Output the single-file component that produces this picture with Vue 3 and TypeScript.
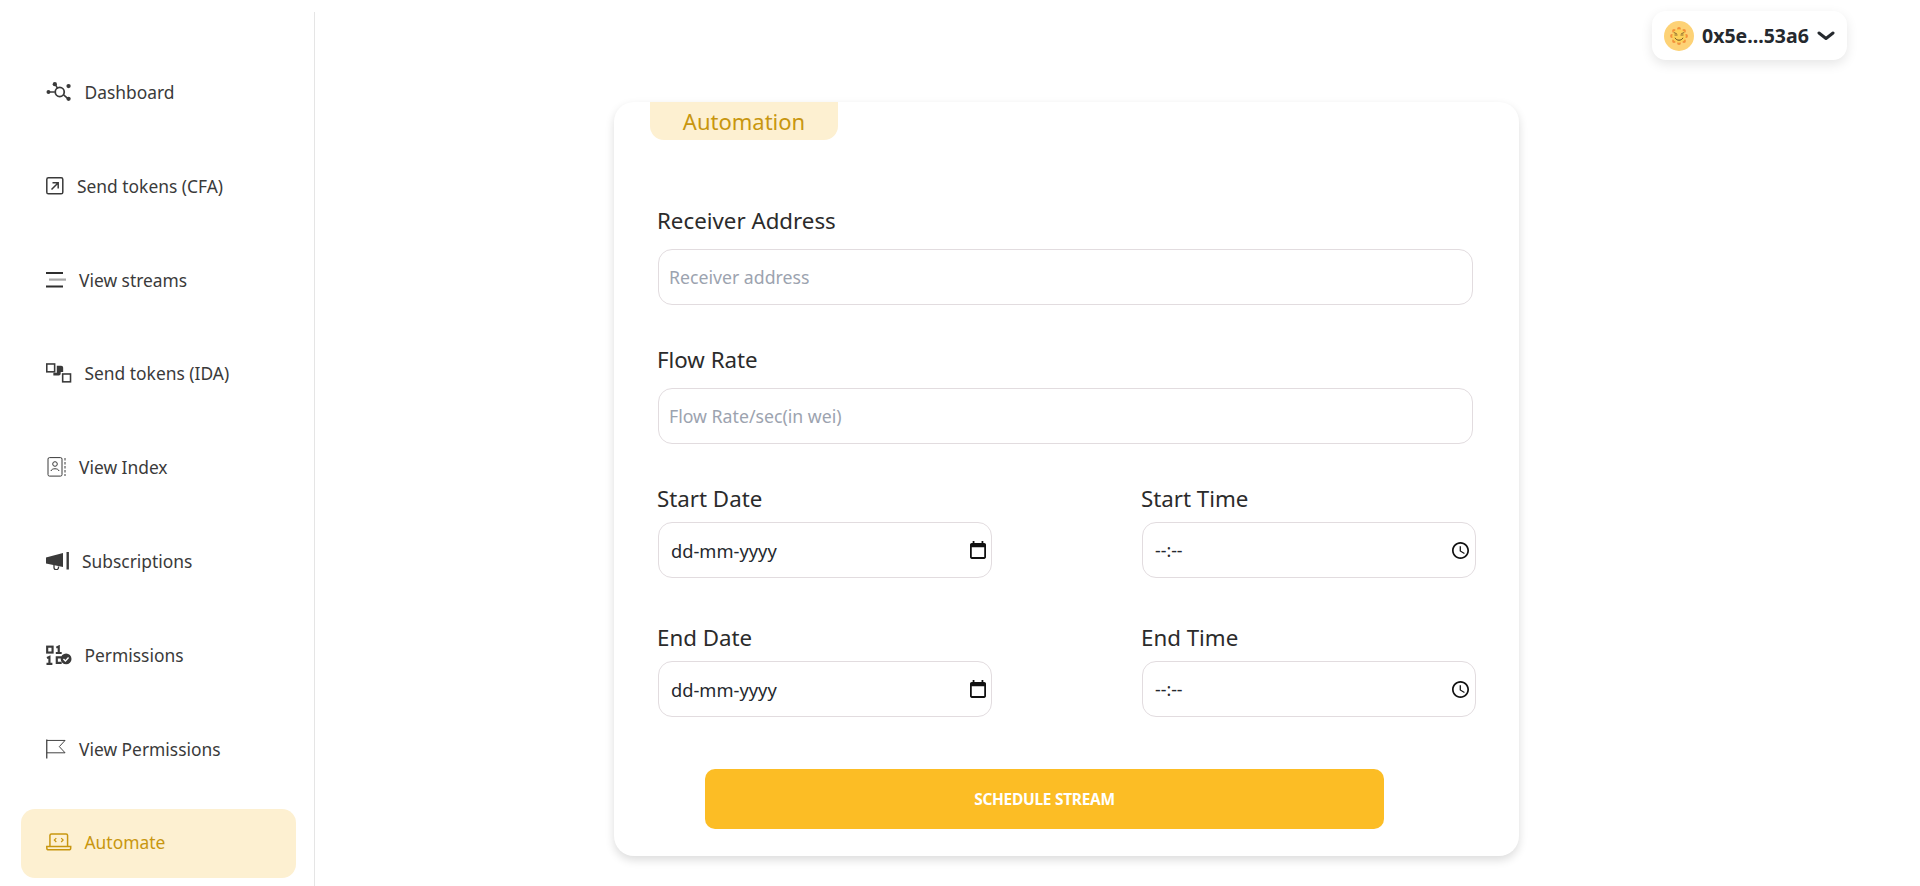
<script setup lang="ts">
interface NavItem { label: string; icon: string; active?: boolean }
const nav: NavItem[] = [
  { label: 'Dashboard', icon: 'dash' },
  { label: 'Send tokens (CFA)', icon: 'send' },
  { label: 'View streams', icon: 'streams' },
  { label: 'Send tokens (IDA)', icon: 'ida' },
  { label: 'View Index', icon: 'index' },
  { label: 'Subscriptions', icon: 'sub' },
  { label: 'Permissions', icon: 'perm' },
  { label: 'View Permissions', icon: 'flag' },
  { label: 'Automate', icon: 'auto', active: true },
]
const calendarPath = 'M19 3h-1V1h-2v2H8V1H6v2H5c-1.11 0-1.99.9-1.99 2L3 19c0 1.1.89 2 2 2h14c1.1 0 2-.9 2-2V5c0-1.1-.9-2-2-2zm0 16H5V8h14v11z'
const clockPath = 'M11.99 2C6.47 2 2 6.48 2 12s4.47 10 9.99 10C17.52 22 22 17.52 22 12S17.52 2 11.99 2zM12 20c-4.420 0-8-3.580-8-8s3.580-8 8-8 8 3.580 8 8-3.580 8-8 8zm.5-13H11v6l5.250 3.150.750-1.230-4.500-2.670z'
</script>

<template>
  <div class="page">
    <aside class="sidebar">
      <a v-for="item in nav" :key="item.label" class="nav" :class="{ active: item.active }">
        <svg v-if="item.icon === 'dash'" class="ico" width="25.5" height="22" viewBox="0 0 26 22" fill="none" stroke="currentColor">
          <circle cx="2.500" cy="11" r="2" fill="currentColor" stroke="none" />
          <circle cx="9" cy="3" r="2.200" fill="currentColor" stroke="none" />
          <circle cx="23" cy="5" r="2.200" fill="currentColor" stroke="none" />
          <circle cx="23" cy="18" r="2.200" fill="currentColor" stroke="none" />
          <circle cx="14" cy="11" r="4.600" stroke-width="1.800" />
          <path d="M4 11h5M9.500 3.500l2.500 4M18 14l4 3.500" stroke-width="1.600" />
        </svg>
        <svg v-else-if="item.icon === 'send'" class="ico" width="18" height="18" viewBox="0 0 18 18" fill="none" stroke="currentColor" stroke-width="1.500">
          <rect x=".8" y=".8" width="16" height="16" rx="1.600" />
          <path d="M5.500 12.500l6.500-6.500M6.500 5.800h5.700v5.700" />
        </svg>
        <svg v-else-if="item.icon === 'streams'" class="ico" width="20" height="16" viewBox="0 0 20 16">
          <rect x="0" y="0" width="17" height="2" fill="#2f2f2f" />
          <rect x="3" y="6.500" width="17" height="2.200" fill="#a8a8a8" />
          <rect x="0" y="13.500" width="17" height="2" fill="#2f2f2f" />
        </svg>
        <svg v-else-if="item.icon === 'ida'" class="ico" width="25.5" height="20" viewBox="0 0 26 20" fill="none" stroke="currentColor" stroke-width="1.600">
          <rect x=".8" y=".8" width="8" height="8" />
          <rect x="17" y="11" width="8" height="8" />
          <path d="M11 2.500h4.500a2 2 0 0 1 2 2V9H15v1.500a2 2 0 0 1-2 2H7.500V9.800H11z" fill="currentColor" stroke="none" />
        </svg>
        <svg v-else-if="item.icon === 'index'" class="ico" width="20" height="20" viewBox="0 0 20 20" fill="none" stroke="currentColor" stroke-width="1">
          <rect x="2" y=".6" width="14" height="18.500" rx="1.500" />
          <circle cx="9" cy="7" r="2.300" />
          <path d="M5 14c.4-3 7.500-3 8 0" />
          <path d="M19 1v18" stroke-dasharray="2.500 1.500" />
        </svg>
        <svg v-else-if="item.icon === 'sub'" class="ico" width="23" height="18" viewBox="0 0 23 18" fill="currentColor">
          <path d="M0 5.500l17-4.500v14l-17-3.500z" />
          <path d="M8 13v2.500a2.200 2.200 0 0 0 4.500 0V14.500" fill="none" stroke="currentColor" stroke-width="1.300" />
          <rect x="20.500" y="0" width="2.400" height="17.500" />
        </svg>
        <svg v-else-if="item.icon === 'perm'" class="ico" width="25.5" height="20" viewBox="0 0 26 20">
          <g fill="none" stroke="currentColor" stroke-width="2.200">
            <rect x="1.200" y="1.500" width="5.500" height="6" />
            <path d="M10.500 2.500l2.500-1.200v6.700M10 8h6" />
            <path d="M1 13l2.500-1v7M.5 19h6" />
            <path d="M16 12.500h-5v5.500h5" />
          </g>
          <circle cx="20.500" cy="14" r="5.500" fill="currentColor" />
          <path d="M17.800 14l2 2 3.200-3.500" fill="none" stroke="#fff" stroke-width="1.400" />
        </svg>
        <svg v-else-if="item.icon === 'flag'" class="ico" width="20" height="20" viewBox="0 0 21 20" fill="none" stroke="currentColor" stroke-width="1">
          <path d="M.8 0v20" stroke-width="1.300" />
          <path d="M1 1h19l-6 6.500 6 6.500H1" />
        </svg>
        <svg v-else class="ico" width="25.5" height="18" viewBox="0 0 26 18" fill="none" stroke="currentColor" stroke-width="1.500">
          <path d="M4 13V2.200A1.500 1.500 0 0 1 5.500.8h15A1.500 1.500 0 0 1 22 2.200V13" />
          <path d="M.8 13.500h24.400v1.500a2 2 0 0 1-2 2H2.800a2 2 0 0 1-2-2z" />
          <path d="M10.500 5L8.500 7l2 2M15.500 5l2 2-2 2" stroke-width="1.200" />
        </svg>
        <span>{{ item.label }}</span>
      </a>
    </aside>

    <main class="main">
      <div class="topbar">
        <button class="wallet" type="button">
          <span class="avatar">
            <svg width="20" height="20" viewBox="0 0 20 20">
              <g fill="#f2913a">
                <circle cx="10" cy="3" r="1.900" /><circle cx="10" cy="17" r="1.900" />
                <circle cx="3" cy="10" r="1.900" /><circle cx="17" cy="10" r="1.900" />
                <circle cx="5" cy="5" r="1.900" /><circle cx="15" cy="5" r="1.900" />
                <circle cx="5" cy="15" r="1.900" /><circle cx="15" cy="15" r="1.900" />
              </g>
              <circle cx="10" cy="10" r="6.800" fill="#fcd25a" />
              <path d="M4.800 6.500l3 1.300M15.200 6.500l-3 1.300" stroke="#8a6a30" stroke-width="1" fill="none" />
              <path d="M5.500 9h3M11.500 9h3" stroke="#8a6a30" stroke-width="1" fill="none" />
              <path d="M6 11.800c1.500 3.200 6.500 3.200 8 0" stroke="#6b4f22" stroke-width="1" fill="none" />
            </svg>
          </span>
          <span class="addr">0x5e...53a6</span>
          <svg class="chev" width="18" height="10" viewBox="0 0 18 10" fill="none" stroke="#25292e" stroke-width="3" stroke-linecap="round" stroke-linejoin="round">
            <path d="M2 2l7 5.500L16 2" />
          </svg>
        </button>
      </div>

      <section class="card">
        <div class="tag">Automation</div>
        <form class="form" @submit.prevent>
          <div class="field">
            <label>Receiver Address</label>
            <input class="inp" type="text" placeholder="Receiver address" />
          </div>
          <div class="field">
            <label>Flow Rate</label>
            <input class="inp" type="text" placeholder="Flow Rate/sec(in wei)" />
          </div>
          <div class="row first">
            <div class="field half">
              <label>Start Date</label>
              <div class="inp picker date">
                <input type="text" placeholder="dd-mm-yyyy" />
                <svg width="16" height="18" viewBox="3 1 18 20"><path :d="calendarPath" /></svg>
              </div>
            </div>
            <div class="field half">
              <label>Start Time</label>
              <div class="inp picker">
                <input type="text" placeholder="--:--" />
                <svg width="17" height="17" viewBox="2 2 20 20"><path :d="clockPath" /></svg>
              </div>
            </div>
          </div>
          <div class="row last">
            <div class="field half">
              <label>End Date</label>
              <div class="inp picker date">
                <input type="text" placeholder="dd-mm-yyyy" />
                <svg width="16" height="18" viewBox="3 1 18 20"><path :d="calendarPath" /></svg>
              </div>
            </div>
            <div class="field half">
              <label>End Time</label>
              <div class="inp picker">
                <input type="text" placeholder="--:--" />
                <svg width="17" height="17" viewBox="2 2 20 20"><path :d="clockPath" /></svg>
              </div>
            </div>
          </div>
          <button class="cta" type="submit">SCHEDULE STREAM</button>
        </form>
      </section>
    </main>
  </div>
</template>

<style scoped>
.page {
  display: flex;
  height: 886px;
  overflow: hidden;
  background: #fff;
  font-family: "Noto Sans", "Open Sans", sans-serif;
  color: #25292e;
}
.sidebar {
  width: 315px;
  margin-top: 12px;
  border-right: 1px solid #e5e5e5;
  padding: 46.6px 18px 0 21px;
  box-sizing: border-box;
  display: flex;
  flex-direction: column;
  gap: 24.8px;
  flex: none;
}
.nav {
  height: 69px;
  flex: none;
  box-sizing: border-box;
  border-radius: 14px;
  padding: 0 0 2px 25px;
  display: flex;
  align-items: center;
  gap: 13px;
  font-size: 17.4px;
  color: #3a3a3a;
}
.nav.active {
  background: #fdf0d1;
  color: #c8960f;
}
.ico { flex: none; }
.main {
  flex: 1;
  min-width: 0;
  display: flex;
  flex-direction: column;
}
.topbar {
  display: flex;
  justify-content: flex-end;
  align-items: flex-start;
  padding: 11px 73px 0 0;
  height: 102px;
  box-sizing: border-box;
  flex: none;
}
.wallet {
  height: 49px;
  width: 195px;
  border: 0;
  border-radius: 14px;
  background: #fff;
  box-shadow: 0 4px 12px rgba(0, 0, 0, 0.1);
  display: flex;
  align-items: center;
  padding: 0 12px;
  font-family: "Noto Sans", sans-serif;
}
.avatar {
  width: 30px;
  height: 30px;
  border-radius: 50%;
  background: #fdd276;
  display: flex;
  align-items: center;
  justify-content: center;
  flex: none;
}
.addr {
  margin-left: 8px;
  font-size: 19.5px;
  font-weight: 700;
  color: #25292e;
  white-space: nowrap;
}
.chev { margin-left: 8px; flex: none; }
.card {
  width: 905px;
  height: 754px;
  margin-left: 299px;
  border-radius: 20px;
  background: #fff;
  box-shadow: 0 4px 10px rgba(0, 0, 0, 0.14);
  box-sizing: border-box;
  padding: 0 46px 0 44px;
  flex: none;
}
.tag {
  width: 188px;
  height: 38px;
  margin-left: -8px;
  padding-bottom: 1px;
  box-sizing: border-box;
  border-radius: 0 0 14px 14px;
  background: #fdf0d1;
  color: #c8960f;
  font-size: 22px;
  display: flex;
  align-items: center;
  justify-content: center;
}
.form {
  display: flex;
  flex-direction: column;
  margin-top: 62px;
}
.field {
  display: flex;
  flex-direction: column;
  gap: 9px;
  margin-bottom: 36px;
}
label {
  font-size: 22.3px;
  line-height: 38px;
  height: 38px;
  margin-left: -1px;
  color: #2b2b2b;
}
.inp {
  height: 56px;
  box-sizing: border-box;
  border: 1px solid #e2dcdf;
  border-radius: 14px;
  padding: 0 10px;
  font-family: "Noto Sans", sans-serif;
  font-size: 17.7px;
  color: #25292e;
  background: #fff;
  outline: none;
}
.inp::placeholder { color: #9ca3af; }
.picker {
  display: flex;
  align-items: center;
  padding: 0 5px 0 12px;
}
.picker.date { font-size: 18.3px; padding-right: 4px; }
.picker input {
  flex: 1;
  min-width: 0;
  border: 0;
  padding: 0;
  outline: none;
  background: transparent;
  font: inherit;
}
.picker input::placeholder { color: #25292e; opacity: 1; }
.picker svg { flex: none; margin-right: 1px; fill: #111; }
.row {
  display: flex;
  justify-content: space-between;
  margin-right: -3px;
}
.half { width: 334px; gap: 4px; }
.row.first .half { margin-bottom: 41px; }
.row.last .half { margin-bottom: 52px; }
.cta {
  width: 679px;
  height: 60px;
  margin: 0 0 0 47px;
  border: 0;
  border-radius: 10px;
  background: #fcbd25;
  color: #fff;
  font-family: "Noto Sans", sans-serif;
  font-size: 15.5px;
  font-weight: 700;
  letter-spacing: -0.3px;
}
</style>
